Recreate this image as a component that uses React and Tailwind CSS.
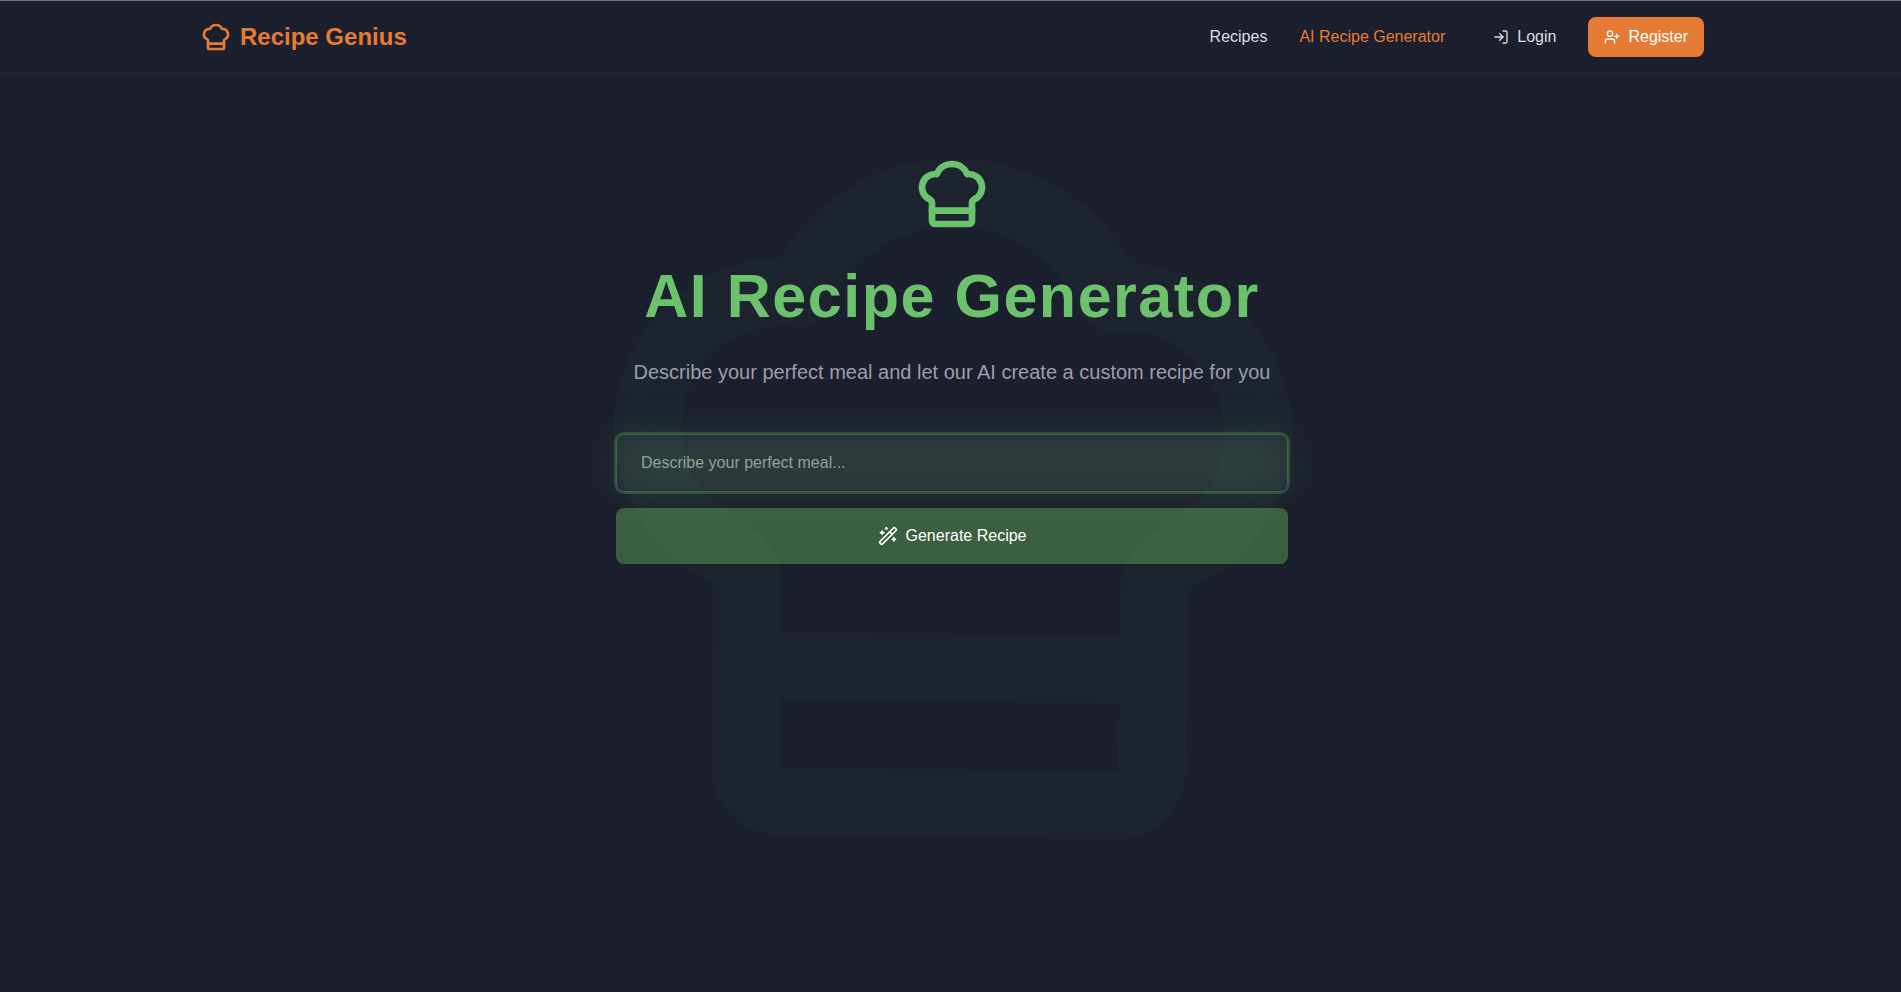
import { useState } from "react";
import { ChefHat, LogIn, UserPlus, WandSparkles } from "lucide-react";

const navLinks = [
  { label: "Recipes", href: "#recipes", active: false },
  { label: "AI Recipe Generator", href: "#generator", active: true },
];

function Header() {
  return (
    <header className="relative z-10 border-t border-b border-t-[#6f7b82] border-b-[#232935] pl-[3px]">
      <div className="mx-auto flex max-w-[1536px] items-center justify-between px-4 py-4">
        <a href="#home" className="flex items-center gap-2 text-[#e57b35]">
          <ChefHat className="size-8" aria-hidden="true" />
          <span className="text-2xl font-bold">Recipe Genius</span>
        </a>

        <nav className="flex items-center gap-8" aria-label="Main">
          {navLinks.map(({ label, href, active }) => (
            <a
              key={label}
              href={href}
              aria-current={active ? "page" : undefined}
              className={active ? "text-[#e57b35]" : "text-[#dcdde1]"}
            >
              {label}
            </a>
          ))}

          <div className="flex items-center gap-4">
            <a
              href="#login"
              className="flex h-10 items-center gap-2 rounded-lg px-4 text-[#dcdde1]"
            >
              <LogIn className="size-4" aria-hidden="true" />
              Login
            </a>
            <a
              href="#register"
              className="flex h-10 items-center gap-2 rounded-lg bg-[#e57b35] px-4 text-white"
            >
              <UserPlus className="size-4" aria-hidden="true" />
              Register
            </a>
          </div>
        </nav>
      </div>
    </header>
  );
}

function GeneratorForm() {
  const [prompt, setPrompt] = useState("");

  return (
    <form
      className="mt-12 flex w-full max-w-2xl flex-col gap-4"
      onSubmit={(event) => event.preventDefault()}
    >
      <div className="relative">
        <div
          className="absolute inset-0 rounded-lg bg-[#5cc56c]/14 blur-[20px]"
          aria-hidden="true"
        />
        <input
          type="text"
          value={prompt}
          onChange={(event) => setPrompt(event.target.value)}
          placeholder="Describe your perfect meal..."
          aria-label="Describe your perfect meal"
          className="relative block h-[58px] w-full rounded-lg border border-[#3e6546] bg-white/4 px-6 text-white ring-2 ring-[#6cc26c]/25 outline-none placeholder:text-[#95a09f]"
        />
      </div>

      <button
        type="submit"
        className="relative flex h-14 items-center justify-center gap-2 rounded-lg bg-[#6cc25f]/40 text-white"
      >
        <WandSparkles className="size-5" aria-hidden="true" />
        Generate Recipe
      </button>
    </form>
  );
}

export default function App() {
  return (
    <div className="relative min-h-screen overflow-hidden bg-[#1c1f2d] font-['Liberation_Sans',Arial,sans-serif] text-base">
      <div
        className="pointer-events-none absolute inset-0 flex items-center justify-center pt-[3px] pl-[3px]"
        aria-hidden="true"
      >
        <ChefHat className="size-[814px] shrink-0 rotate-[0.8deg] text-[#4bc56c] opacity-3" />
      </div>

      <Header />

      <main className="relative flex flex-col items-center px-4 pt-20 pl-[19px] text-center">
        <ChefHat className="size-20 text-[#6cc26c]" aria-hidden="true" />
        <h1 className="mt-8 text-[61px] leading-[60px] font-bold tracking-wide text-[#6cc26c]">
          AI Recipe Generator
        </h1>
        <p className="mt-8 text-xl text-[#9c9dab]">
          Describe your perfect meal and let our AI create a custom recipe for you
        </p>
        <GeneratorForm />
      </main>
    </div>
  );
}
